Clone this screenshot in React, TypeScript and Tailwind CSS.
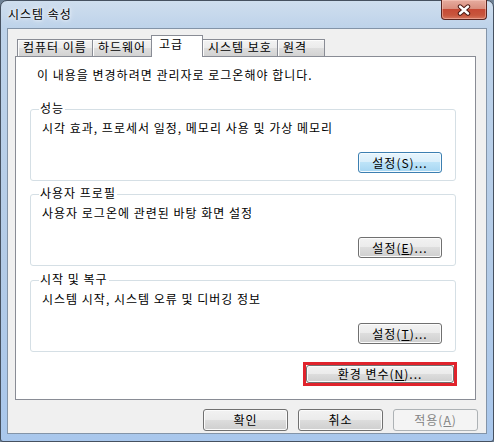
import React from "react";

const btnBase =
  "flex items-center justify-center rounded-[3px] border text-[12px] leading-none";
const btnNormal =
  "border-[#707070] bg-[linear-gradient(to_bottom,#f2f2f2_0%,#ebebeb_50%,#dddddd_50%,#cfcfcf_100%)] shadow-[inset_0_0_0_1px_#fbfbfb]";
const btnFocus =
  "border-[#3c7fb1] bg-[linear-gradient(to_bottom,#e8f5fc_0%,#d8eefb_50%,#bde3f8_50%,#a6d6f2_100%)] shadow-[inset_0_0_0_1px_#f4fbff]";

const Group = function ({
  title,
  desc,
  btn,
}: {
  title: string;
  desc: string;
  btn: React.ReactNode;
}) {
  return (
    <div className="relative flex h-[72px] flex-col justify-between rounded-[3px] border border-[#d5dfe5] pb-[7px] pl-[11px] pr-[13px] pt-[10px]">
      <span className="absolute -top-[10px] left-[8px] bg-white px-px leading-[15px]">
        {title}
      </span>
      <p className="leading-[15px]">{desc}</p>
      <div className="flex justify-end">{btn}</div>
    </div>
  );
};

const Tab = function ({ label, w }: { label: string; w: string }) {
  return (
    <div
      className={`-ml-px h-[17px] shrink-0 border border-b-0 border-[#898c95] bg-[linear-gradient(to_bottom,#f3f3f3_0%,#ebebeb_50%,#dedede_50%,#d2d2d2_100%)] pl-[5px] leading-[13px] shadow-[inset_1px_1px_0_#fcfcfc] first:ml-0 ${w}`}
    >
      {label}
    </div>
  );
};

export default function App() {
  return (
    <div className="h-[442px] w-[494px] bg-[#6f8296] font-['Noto_Sans_CJK_KR','Noto_Sans',sans-serif] text-[12px] tracking-[1px] text-black">
      <div className="flex h-[442px] w-[494px] flex-col rounded-t-[7px] rounded-b-[3px] border border-[#465160] bg-[linear-gradient(to_bottom,#cfdeee_0%,#bed3ea_6%,#b3cbe7_60%,#a9c7ec_100%)]">
        {/* title bar */}
        <div className="flex h-[27px] items-start justify-between pl-[7px] pr-[6px]">
          <span className="mt-[5px] leading-[16px] [text-shadow:0_0_6px_#ffffff,0_0_3px_#ffffff]">
            시스템 속성
          </span>
          <div className="-mt-px flex h-[20px] w-[46px] items-center justify-center rounded-b-[4px] border border-t-0 border-[#5a2520] bg-[linear-gradient(to_bottom,#e6ac9f_0%,#d98e7e_45%,#c64a35_50%,#c8563d_80%,#d6765e_100%)] shadow-[inset_0_0_0_1px_rgba(255,210,200,0.45)]">
            <svg width="14" height="12" viewBox="0 0 14 12">
              <path
                d="M3 2.5 L11 9.5 M11 2.5 L3 9.5"
                stroke="#4a1812"
                strokeWidth="4.4"
                strokeLinecap="round"
              />
              <path
                d="M3 2.5 L11 9.5 M11 2.5 L3 9.5"
                stroke="#ffffff"
                strokeWidth="2.5"
                strokeLinecap="round"
              />
            </svg>
          </div>
        </div>

        {/* client area */}
        <div className="mx-[6px] flex h-[406px] flex-col border border-[#8394a8] bg-[#f0f0f0] pt-[6px]">
          {/* tabs */}
          <div className="ml-[7px] mr-[10px] flex h-[21px] items-end pl-[2px]">
            <Tab label="컴퓨터 이름" w="w-[76px]" />
            <Tab label="하드웨어" w="w-[61px]" />
            <div className="relative z-10 -mb-px -ml-[2px] h-[22px] w-[52px] shrink-0 border border-b-0 border-[#898c95] bg-white pl-[7px] leading-[16px]">
              고급
            </div>
            <Tab label="시스템 보호" w="w-[76px]" />
            <Tab label="원격" w="w-[48px]" />
          </div>

          {/* panel */}
          <div className="ml-[7px] mr-[10px] flex h-[344px] flex-col border border-[#898c95] bg-white pl-[14px] pr-[19px] pt-[10px]">
            <p className="ml-[7px] leading-[16px]">
              이 내용을 변경하려면 관리자로 로그온해야 합니다.
            </p>
            <div className="mt-[26px]">
              <Group
                title="성능"
                desc="시각 효과, 프로세서 일정, 메모리 사용 및 가상 메모리"
                btn={
                  <button className={`${btnBase} ${btnFocus} h-[21px] w-[84px]`}>
                    설정(S)...
                  </button>
                }
              />
            </div>
            <div className="mt-[13px]">
              <Group
                title="사용자 프로필"
                desc="사용자 로그온에 관련된 바탕 화면 설정"
                btn={
                  <button className={`${btnBase} ${btnNormal} h-[21px] w-[84px]`}>
                    설정(<span className="underline">E</span>)...
                  </button>
                }
              />
            </div>
            <div className="mt-[14px]">
              <Group
                title="시작 및 복구"
                desc="시스템 시작, 시스템 오류 및 디버깅 정보"
                btn={
                  <button className={`${btnBase} ${btnNormal} h-[21px] w-[84px]`}>
                    설정(<span className="underline">T</span>)...
                  </button>
                }
              />
            </div>
            <div className="-mr-px mt-[10px] flex justify-end">
              <div className="h-[24px] w-[154px] border-[3px] border-[#e0232c]">
                <button className={`${btnBase} ${btnNormal} h-full w-full`}>
                  환경 변수(<span className="underline">N</span>)...
                </button>
              </div>
            </div>
          </div>

          {/* dialog buttons */}
          <div className="mb-[2px] mr-[8px] mt-[9px] flex justify-end gap-[10px]">
            <button className={`${btnBase} ${btnNormal} h-[22px] w-[85px]`}>확인</button>
            <button className={`${btnBase} ${btnNormal} h-[22px] w-[85px]`}>취소</button>
            <button
              className={`${btnBase} h-[22px] w-[85px] border-[#adb2b5] bg-[#f4f4f4] text-[#838383]`}
            >
              적용(<span className="underline">A</span>)
            </button>
          </div>
        </div>
      </div>
    </div>
  );
}
